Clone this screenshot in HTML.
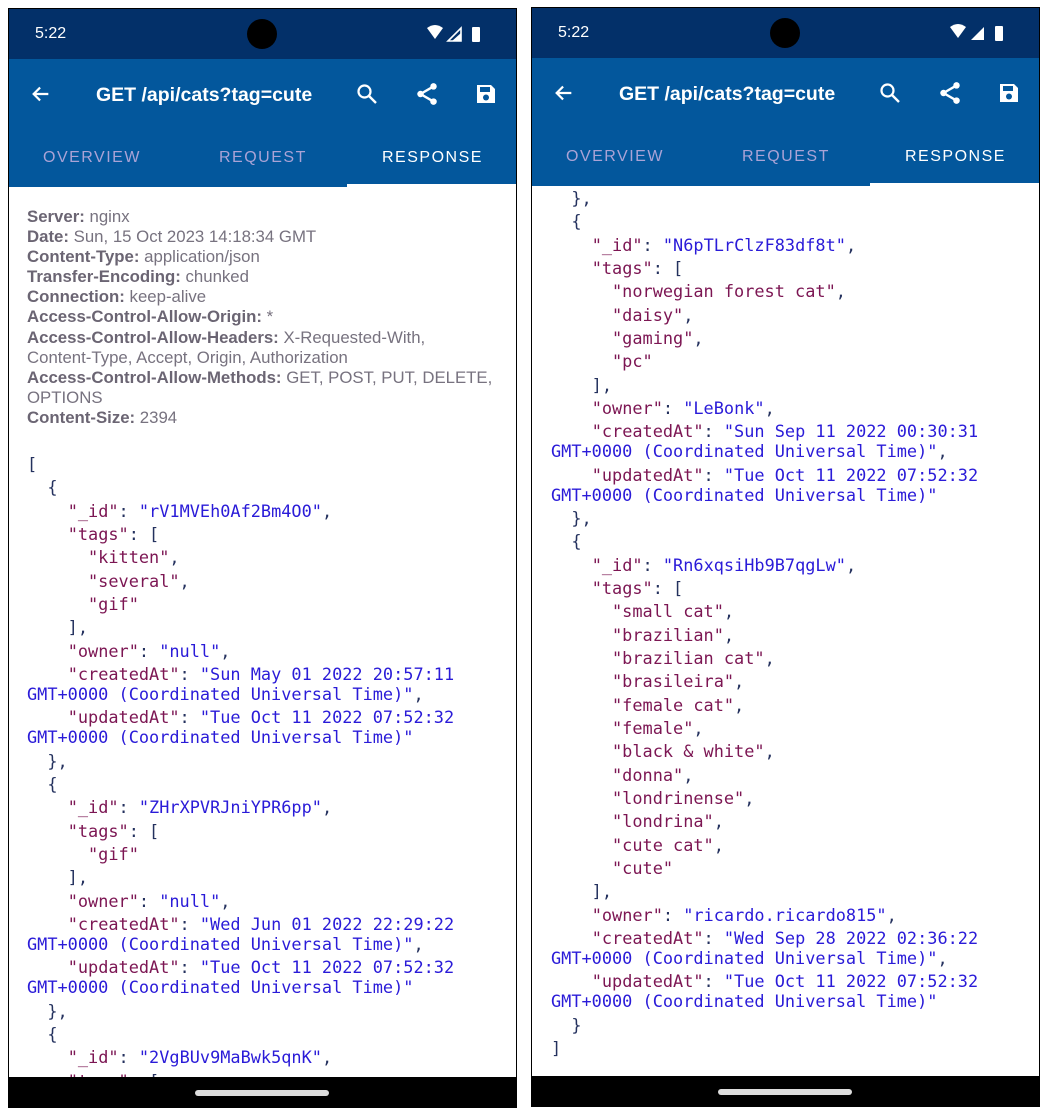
<!DOCTYPE html>
<html><head><meta charset="utf-8">
<style>
*{margin:0;padding:0;box-sizing:border-box}
body{width:1044px;height:1111px;background:#fff;position:relative;overflow:hidden;font-family:"Liberation Sans",sans-serif}
.ph{position:absolute;top:8px;width:509px;height:1100px;background:#000;border:1px solid #000;overflow:hidden}
.sb{position:absolute;left:0;top:0;width:100%;height:50px;background:#033069}
.time{position:absolute;left:26px;top:16px;color:#fff;font-size:16px}
.cam{position:absolute;left:238px;top:10px;width:30px;height:30px;border-radius:50%;background:#000}
.tb{position:absolute;left:0;top:50px;width:100%;height:128px;background:#03579c}
.title{position:absolute;left:87px;top:25px;color:#fff;font-size:19.5px;font-weight:bold;letter-spacing:0px}
.tab{position:absolute;top:90px;font-size:16px;letter-spacing:1.5px;color:#aaa3d6}
.ind{position:absolute;left:338px;top:125px;width:171px;height:3px;background:#fff}
.ct{position:absolute;left:0;top:178px;width:100%;background:#fff;overflow:hidden}
.hd{position:absolute;left:18px;font-size:16.8px;line-height:20.1px;color:#77727f;white-space:pre}
.hd b{color:#6b6573}
.js{position:absolute;font-family:"DejaVu Sans Mono","Liberation Mono",monospace;font-size:16.9px;color:#24315e}
.js div{line-height:20px;padding-bottom:3.33px;white-space:pre}
.k{color:#7c1653}.s{color:#2a1bd8}.t{color:#7c1653}
.nav{position:absolute;left:186px;width:134px;height:6px;border-radius:3px;background:#ddd}
</style></head><body>

<!-- LEFT PHONE -->
<div class="ph" style="left:8px">
 <div class="sb"><div class="time">5:22</div><div class="cam"></div>
  <svg style="position:absolute;left:418px;top:16px" width="56" height="18" viewBox="0 0 56 18"><path d="M0 3 Q8 -3 16 3 L8 14 Z" fill="#fff"/><path d="M34 3 L34 16 L21 16 Z" fill="none" stroke="#fff" stroke-width="1.6"/><path d="M25 16 L34 8 L34 16Z" fill="#fff"/><rect x="45" y="2" width="8" height="15" rx="1" fill="#fff"/></svg>
 </div>
 <div class="tb">
  <svg style="position:absolute;left:21px;top:24px" width="22" height="22" viewBox="0 0 24 24"><path d="M20 12H4M11 5l-7 7 7 7" stroke="#fff" stroke-width="2.4" fill="none"/></svg>
  <div class="title">GET /api/cats?tag=cute</div>
  <svg style="position:absolute;left:346px;top:23px" width="24" height="24" viewBox="0 0 24 24"><circle cx="9.5" cy="9.5" r="6" stroke="#fff" stroke-width="2.2" fill="none"/><path d="M14 14l7 7" stroke="#fff" stroke-width="2.4"/></svg>
  <svg style="position:absolute;left:405px;top:22px" width="26" height="26" viewBox="0 0 24 24"><circle cx="18" cy="5" r="3" fill="#fff"/><circle cx="6" cy="12" r="3" fill="#fff"/><circle cx="18" cy="19" r="3" fill="#fff"/><path d="M18 5L6 12l12 7" stroke="#fff" stroke-width="2.2" fill="none"/></svg>
  <svg style="position:absolute;left:465px;top:23px" width="24" height="24" viewBox="0 0 24 24"><path d="M3 3h14l4 4v14H3z" fill="#fff"/><rect x="6" y="5" width="10" height="5" fill="#03579c"/><circle cx="12" cy="15.5" r="3" fill="#03579c"/></svg>
  <div class="tab" style="left:34px">OVERVIEW</div>
  <div class="tab" style="left:210px">REQUEST</div>
  <div class="tab" style="left:373px;color:#fff">RESPONSE</div>
  <div class="ind"></div>
 </div>
 <div class="ct" style="height:890px">
  <div class="hd" style="top:20px"><b>Server:</b> nginx
<b>Date:</b> Sun, 15 Oct 2023 14:18:34 GMT
<b>Content-Type:</b> application/json
<b>Transfer-Encoding:</b> chunked
<b>Connection:</b> keep-alive
<b>Access-Control-Allow-Origin:</b> *
<b>Access-Control-Allow-Headers:</b> X-Requested-With,
Content-Type, Accept, Origin, Authorization
<b>Access-Control-Allow-Methods:</b> GET, POST, PUT, DELETE,
OPTIONS
<b>Content-Size:</b> 2394</div>
  <div class="js" style="left:18px;top:267px">
<div>[</div>
<div>  {</div>
<div>    <span class="k">"_id"</span>: <span class="s">"rV1MVEh0Af2Bm4O0"</span>,</div>
<div>    <span class="k">"tags"</span>: [</div>
<div>      <span class="t">"kitten"</span>,</div>
<div>      <span class="t">"several"</span>,</div>
<div>      <span class="t">"gif"</span></div>
<div>    ],</div>
<div>    <span class="k">"owner"</span>: <span class="s">"null"</span>,</div>
<div>    <span class="k">"createdAt"</span>: <span class="s">"Sun May 01 2022 20:57:11<br>GMT+0000 (Coordinated Universal Time)"</span>,</div>
<div>    <span class="k">"updatedAt"</span>: <span class="s">"Tue Oct 11 2022 07:52:32<br>GMT+0000 (Coordinated Universal Time)"</span></div>
<div>  },</div>
<div>  {</div>
<div>    <span class="k">"_id"</span>: <span class="s">"ZHrXPVRJniYPR6pp"</span>,</div>
<div>    <span class="k">"tags"</span>: [</div>
<div>      <span class="t">"gif"</span></div>
<div>    ],</div>
<div>    <span class="k">"owner"</span>: <span class="s">"null"</span>,</div>
<div>    <span class="k">"createdAt"</span>: <span class="s">"Wed Jun 01 2022 22:29:22<br>GMT+0000 (Coordinated Universal Time)"</span>,</div>
<div>    <span class="k">"updatedAt"</span>: <span class="s">"Tue Oct 11 2022 07:52:32<br>GMT+0000 (Coordinated Universal Time)"</span></div>
<div>  },</div>
<div>  {</div>
<div>    <span class="k">"_id"</span>: <span class="s">"2VgBUv9MaBwk5qnK"</span>,</div>
<div>    <span class="k">"tags"</span>: [</div>
  </div>
 </div>
 <div class="nav" style="top:1081px"></div>
</div>

<!-- RIGHT PHONE -->
<div class="ph" style="left:531px;top:7px">
 <div class="sb"><div class="time">5:22</div><div class="cam"></div>
  <svg style="position:absolute;left:418px;top:16px" width="56" height="18" viewBox="0 0 56 18"><path d="M0 3 Q8 -3 16 3 L8 14 Z" fill="#fff"/><path d="M34 3 L34 16 L21 16 Z" fill="#fff"/><rect x="45" y="2" width="8" height="15" rx="1" fill="#fff"/></svg>
 </div>
 <div class="tb">
  <svg style="position:absolute;left:21px;top:24px" width="22" height="22" viewBox="0 0 24 24"><path d="M20 12H4M11 5l-7 7 7 7" stroke="#fff" stroke-width="2.4" fill="none"/></svg>
  <div class="title">GET /api/cats?tag=cute</div>
  <svg style="position:absolute;left:346px;top:23px" width="24" height="24" viewBox="0 0 24 24"><circle cx="9.5" cy="9.5" r="6" stroke="#fff" stroke-width="2.2" fill="none"/><path d="M14 14l7 7" stroke="#fff" stroke-width="2.4"/></svg>
  <svg style="position:absolute;left:405px;top:22px" width="26" height="26" viewBox="0 0 24 24"><circle cx="18" cy="5" r="3" fill="#fff"/><circle cx="6" cy="12" r="3" fill="#fff"/><circle cx="18" cy="19" r="3" fill="#fff"/><path d="M18 5L6 12l12 7" stroke="#fff" stroke-width="2.2" fill="none"/></svg>
  <svg style="position:absolute;left:465px;top:23px" width="24" height="24" viewBox="0 0 24 24"><path d="M3 3h14l4 4v14H3z" fill="#fff"/><rect x="6" y="5" width="10" height="5" fill="#03579c"/><circle cx="12" cy="15.5" r="3" fill="#03579c"/></svg>
  <div class="tab" style="left:34px">OVERVIEW</div>
  <div class="tab" style="left:210px">REQUEST</div>
  <div class="tab" style="left:373px;color:#fff">RESPONSE</div>
  <div class="ind"></div>
 </div>
 <div class="ct" style="height:890px">
  <div class="js" style="left:19px;top:2px">
<div>  },</div>
<div>  {</div>
<div>    <span class="k">"_id"</span>: <span class="s">"N6pTLrClzF83df8t"</span>,</div>
<div>    <span class="k">"tags"</span>: [</div>
<div>      <span class="t">"norwegian forest cat"</span>,</div>
<div>      <span class="t">"daisy"</span>,</div>
<div>      <span class="t">"gaming"</span>,</div>
<div>      <span class="t">"pc"</span></div>
<div>    ],</div>
<div>    <span class="k">"owner"</span>: <span class="s">"LeBonk"</span>,</div>
<div>    <span class="k">"createdAt"</span>: <span class="s">"Sun Sep 11 2022 00:30:31<br>GMT+0000 (Coordinated Universal Time)"</span>,</div>
<div>    <span class="k">"updatedAt"</span>: <span class="s">"Tue Oct 11 2022 07:52:32<br>GMT+0000 (Coordinated Universal Time)"</span></div>
<div>  },</div>
<div>  {</div>
<div>    <span class="k">"_id"</span>: <span class="s">"Rn6xqsiHb9B7qgLw"</span>,</div>
<div>    <span class="k">"tags"</span>: [</div>
<div>      <span class="t">"small cat"</span>,</div>
<div>      <span class="t">"brazilian"</span>,</div>
<div>      <span class="t">"brazilian cat"</span>,</div>
<div>      <span class="t">"brasileira"</span>,</div>
<div>      <span class="t">"female cat"</span>,</div>
<div>      <span class="t">"female"</span>,</div>
<div>      <span class="t">"black &amp; white"</span>,</div>
<div>      <span class="t">"donna"</span>,</div>
<div>      <span class="t">"londrinense"</span>,</div>
<div>      <span class="t">"londrina"</span>,</div>
<div>      <span class="t">"cute cat"</span>,</div>
<div>      <span class="t">"cute"</span></div>
<div>    ],</div>
<div>    <span class="k">"owner"</span>: <span class="s">"ricardo.ricardo815"</span>,</div>
<div>    <span class="k">"createdAt"</span>: <span class="s">"Wed Sep 28 2022 02:36:22<br>GMT+0000 (Coordinated Universal Time)"</span>,</div>
<div>    <span class="k">"updatedAt"</span>: <span class="s">"Tue Oct 11 2022 07:52:32<br>GMT+0000 (Coordinated Universal Time)"</span></div>
<div>  }</div>
<div>]</div>
  </div>
 </div>
 <div class="nav" style="top:1081px"></div>
</div>
</body></html>
